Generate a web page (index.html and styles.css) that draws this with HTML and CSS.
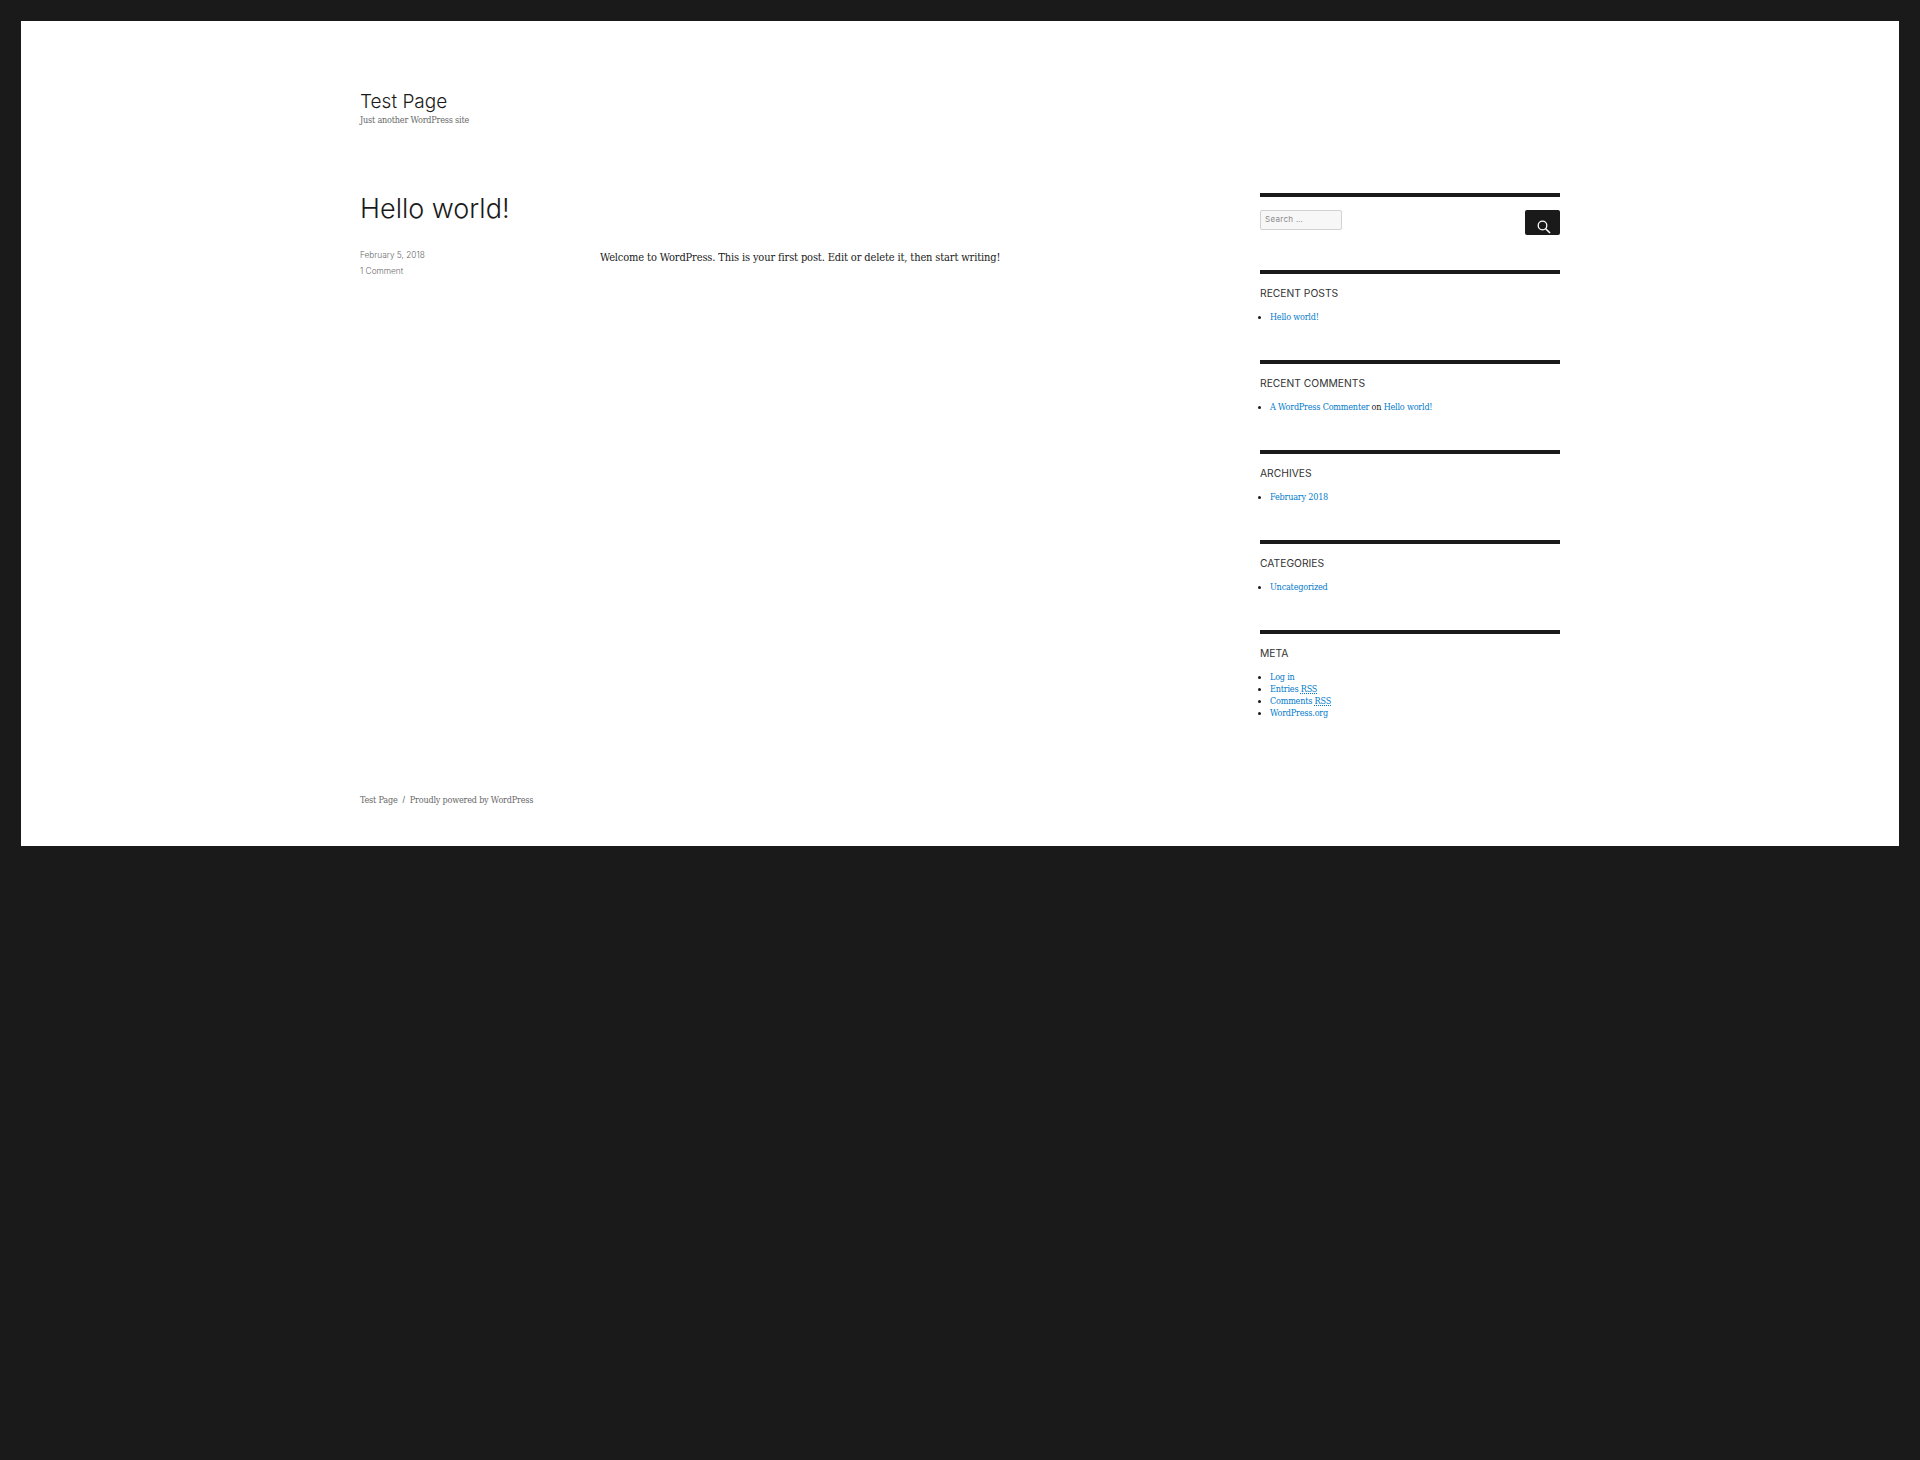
FILE: index.html
```html
<!DOCTYPE html>
<html lang="en">
<head>
    <meta charset="UTF-8">
    <title>Test Page</title>
    <link rel="stylesheet" href="styles.css">
</head>
<body>
    <div class="site">
        <div class="site-inner">
            <header class="site-header">
                <p class="site-title"><a href="#">Test Page</a></p>
                <p class="site-description">Just another WordPress site</p>
            </header>

            <div class="site-content">
                <main class="entry">
                    <h1 class="entry-title">Hello world!</h1>
                    <div class="entry-body">
                        <div class="entry-meta">
                            <a href="#">February 5, 2018</a>
                            <a href="#">1 Comment</a>
                        </div>
                        <div class="entry-text">
                            <p>Welcome to WordPress. This is your first post. Edit or delete it, then start writing!</p>
                        </div>
                    </div>
                </main>

                <aside class="sidebar">
                    <section class="widget widget-search">
                        <form class="search-form">
                            <input class="search-field" type="search" placeholder="Search …">
                            <button class="search-submit" type="button" aria-label="Search">
                                <svg width="14" height="14" viewBox="0 0 14 14">
                                    <circle cx="5.5" cy="5.5" r="4.3" fill="none" stroke="#fff" stroke-width="1.3"/>
                                    <path d="M8.7 8.7L13 13" fill="none" stroke="#fff" stroke-width="1.6"/>
                                </svg>
                            </button>
                        </form>
                    </section>
                    <section class="widget">
                        <h2 class="widget-title">Recent Posts</h2>
                        <ul>
                            <li><a href="#">Hello world!</a></li>
                        </ul>
                    </section>
                    <section class="widget">
                        <h2 class="widget-title">Recent Comments</h2>
                        <ul>
                            <li><a href="#">A WordPress Commenter</a> on <a href="#">Hello world!</a></li>
                        </ul>
                    </section>
                    <section class="widget">
                        <h2 class="widget-title">Archives</h2>
                        <ul>
                            <li><a href="#">February 2018</a></li>
                        </ul>
                    </section>
                    <section class="widget">
                        <h2 class="widget-title">Categories</h2>
                        <ul>
                            <li><a href="#">Uncategorized</a></li>
                        </ul>
                    </section>
                    <section class="widget">
                        <h2 class="widget-title">Meta</h2>
                        <ul>
                            <li><a href="#">Log in</a></li>
                            <li><a href="#">Entries <abbr title="Really Simple Syndication">RSS</abbr></a></li>
                            <li><a href="#">Comments <abbr title="Really Simple Syndication">RSS</abbr></a></li>
                            <li><a href="#">WordPress.org</a></li>
                        </ul>
                    </section>
                </aside>
            </div>

            <footer class="site-footer">
                <a href="#">Test Page</a><span class="sep">/</span><a href="#">Proudly powered by WordPress</a>
            </footer>
        </div>
    </div>
</body>
</html>
```

FILE: styles.css
```css
body {
    margin: 0;
    padding: 21px;
    background: #1a1a1a;
    color: #1a1a1a;
    font-family: "DejaVu Serif Condensed", "Liberation Serif", serif;
    font-size: 9px;
    letter-spacing: -0.2px;
}

a {
    color: #007acc;
    text-decoration: none;
}

.site {
    height: 825px;
    background: #ffffff;
}

.site-inner {
    width: 1200px;
    margin: 0 auto;
    padding-top: 70px;
}

/* header */
.site-header {
    height: 102px;
}

.site-title {
    margin: 0;
    font-family: Inter, "Open Sans", sans-serif;
    font-size: 19px;
    font-weight: 300;
    line-height: 22px;
    letter-spacing: 0;
}

.site-title a {
    color: #1a1a1a;
}

.site-description {
    margin: 0;
    color: #686868;
    line-height: 14px;
}

/* main column */
.site-content {
    display: flex;
    justify-content: space-between;
    align-items: flex-start;
}

.entry {
    width: 900px;
}

.entry-title {
    margin: 0 0 25px;
    font-family: Inter, "Open Sans", sans-serif;
    font-size: 27px;
    font-weight: 300;
    line-height: 32px;
    letter-spacing: 0;
}

.entry-body {
    display: flex;
}

.entry-meta {
    display: flex;
    flex-direction: column;
    gap: 6px;
    width: 240px;
    font-family: Inter, "Open Sans", sans-serif;
    font-size: 8.3px;
    font-weight: 300;
    line-height: 10px;
    letter-spacing: 0;
}

.entry-meta a {
    color: #686868;
}

.entry-text {
    width: 420px;
    font-size: 11px;
    line-height: 16px;
    letter-spacing: -0.14px;
}

.entry-text p {
    margin: 0;
}

/* sidebar */
.sidebar {
    width: 300px;
}

.widget {
    height: 90px;
    box-sizing: border-box;
    border-top: 4px solid #1a1a1a;
    padding-top: 13px;
}

.widget-search {
    height: 77px;
}

.search-form {
    display: flex;
    justify-content: space-between;
    align-items: flex-start;
}

.search-field {
    width: 82px;
    height: 20px;
    box-sizing: border-box;
    margin: 0;
    padding: 0 4px 2px;
    border: 1px solid #d1d1d1;
    border-radius: 2px;
    background: #f7f7f7;
    font-family: Inter, "Open Sans", sans-serif;
    font-size: 8px;
    letter-spacing: 0.3px;
    outline: none;
}

.search-field::placeholder {
    color: #8a8a8a;
}

.search-submit {
    display: flex;
    justify-content: center;
    align-items: flex-end;
    width: 35px;
    height: 25px;
    padding: 0 0 1px 3px;
    border: none;
    border-radius: 2px;
    background: #1a1a1a;
}

.widget-title {
    margin: 0 0 12px;
    color: #333333;
    font-family: Inter, "Open Sans", sans-serif;
    font-size: 10.3px;
    font-weight: 400;
    line-height: 12px;
    letter-spacing: 0;
    text-transform: uppercase;
}

.widget ul {
    margin: 0;
    padding-left: 10px;
    line-height: 12px;
}

/* footer */
.site-footer {
    margin-top: 73px;
    color: #686868;
    line-height: 14px;
}

.site-footer a {
    color: #686868;
}

.sep {
    margin: 0 5px;
    font-family: "Liberation Sans", sans-serif;
}
```
